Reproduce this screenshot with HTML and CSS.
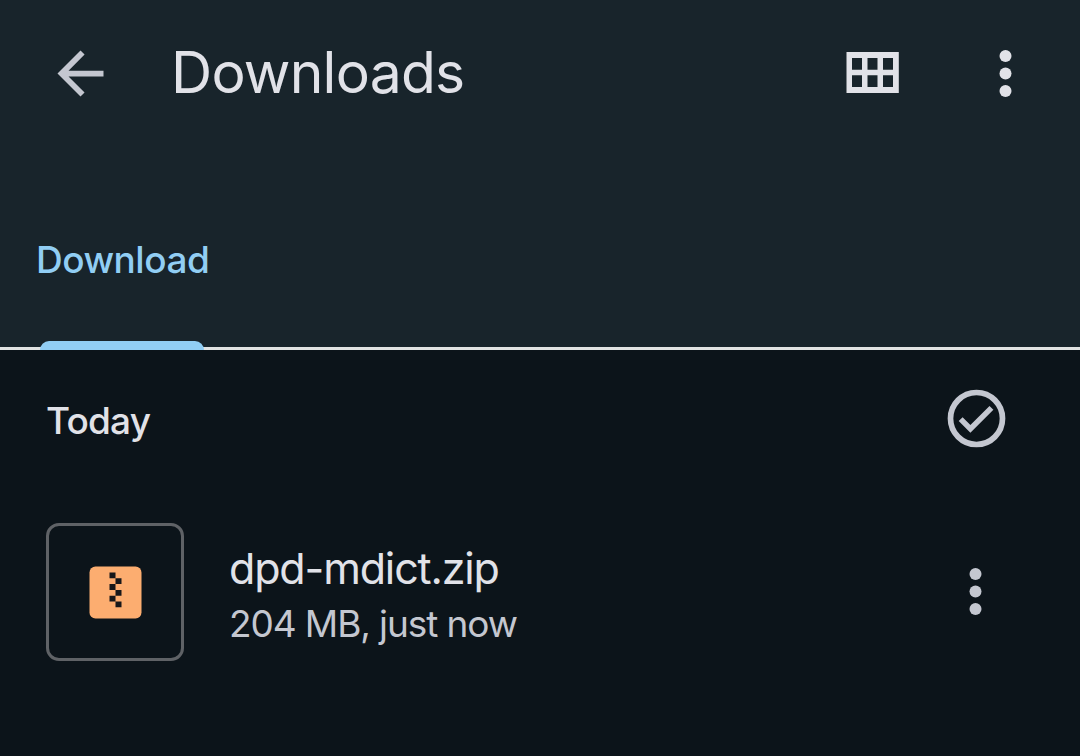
FILE: index.html
```html
<!DOCTYPE html>
<html lang="en">
<head>
<meta charset="utf-8">
<title>Downloads</title>
<link rel="stylesheet" href="styles.css">
</head>
<body>
<header class="header">
  <div class="toolbar">
    <svg class="back" viewBox="0 0 24 24"><path d="M20 11H7.83l5.59-5.59L12 4l-8 8 8 8 1.41-1.41L7.83 13H20z"/></svg>
    <h1 class="title">Downloads</h1>
    <svg class="grid" viewBox="-.5 0 53 41"><path fill-rule="evenodd" d="M0 0H52.3V41H0ZM5.5 6V17.8H15.5V6ZM21 6V17.8H31V6ZM36.5 6V17.8H46.5V6ZM5.5 23.2V35H15.5V23.2ZM21 23.2V35H31V23.2ZM36.5 23.2V35H46.5V23.2Z"/></svg>
    <svg class="more" viewBox="0 0 13 47"><circle cx="6.5" cy="6" r="6"/><circle cx="6.5" cy="23.5" r="6"/><circle cx="6.5" cy="41" r="6"/></svg>
  </div>
  <nav class="tabs"><a class="tab"><span class="tab-label">Download</span></a></nav>
</header>
<main>
  <div class="section">
    <h2 class="section-title">Today</h2>
    <svg class="select" viewBox="-.5 -.5 59 59"><circle cx="29" cy="29" r="26"/><path d="M11.2 31.6l3.9-3.9 7.8 7.8L42 16.4l3.9 3.9L22.9 43.3z"/></svg>
  </div>
  <div class="file">
    <div class="thumb">
      <svg class="zip" viewBox="-.5 -.5 53 53"><rect class="zip-body" width="52" height="52" rx="6"/><path class="zip-teeth" d="M20 6h6v5.8h-6zM26 11.8h6v5.8h-6zM20 17.6h6v5.8h-6zM26 23.4h6v5.8h-6zM20 29.2h6V35h-6zM26 35h6v5.8h-6z"/></svg>
    </div>
    <div class="info">
      <div class="name">dpd-mdict.zip</div>
      <div class="meta">204 MB, just now</div>
    </div>
    <svg class="more row-more" viewBox="0 0 13 47"><circle cx="6.5" cy="6" r="6"/><circle cx="6.5" cy="23.5" r="6"/><circle cx="6.5" cy="41" r="6"/></svg>
  </div>
</main>
</body>
</html>
```
FILE: styles.css
```css
* { box-sizing: border-box; }
body {
  margin: 0;
  height: 756px;
  overflow: hidden;
  background: #0c141a;
  color: #e1e2e8;
  font-family: Inter, "Liberation Sans", sans-serif;
}
h1, h2 { margin: 0; }
svg { display: block; flex: none; }
.header {
  height: 350px;
  display: flex;
  flex-direction: column;
  justify-content: space-between;
  background: #18242b;
  border-bottom: 3px solid #e1e3e3;
}
.toolbar {
  height: 147px;
  display: flex;
  align-items: center;
  padding: 0 68px 0 46px;
}
.back { width: 69px; height: 69px; fill: #c4c7d0; }
.title {
  margin: -1px 0 0 56px;
  font-size: 57px;
  line-height: 70px;
  font-weight: 400;
  letter-spacing: -0.75px;
}
.grid { width: 53px; height: 41px; margin: 0 100px 2px auto; fill: #e1e2e8; }
.more { width: 13px; height: 47px; fill: #e1e2e8; }
.tabs { display: flex; height: 120px; padding-left: 36px; margin-bottom: -3px; }
.tab {
  width: 171px;
  display: flex;
  flex-direction: column;
  justify-content: space-between;
  color: #91cef4;
}
.tab::after {
  content: "";
  width: 164px;
  height: 9px;
  margin-left: 4px;
  border-radius: 9px 9px 0 0;
  background: #91cef4;
}
.tab-label {
  font-size: 37px;
  line-height: 60px;
  font-weight: 500;
  letter-spacing: -0.5px;
}
.section {
  height: 137px;
  display: flex;
  align-items: center;
  justify-content: space-between;
  padding: 0 74px 0 46px;
}
.section-title {
  padding-top: 4px;
  font-size: 37px;
  line-height: 50px;
  font-weight: 500;
  letter-spacing: -0.8px;
}
.select { width: 59px; height: 59px; fill: #c4c7d0; }
.select circle { fill: none; stroke: #c4c7d0; stroke-width: 5.7; }
.file {
  display: flex;
  align-items: center;
  height: 138px;
  margin-top: 36px;
  padding: 0 98px 0 46px;
}
.thumb {
  width: 138px;
  height: 138px;
  display: grid;
  place-items: center;
  border: 3px solid #5f6266;
  border-radius: 13px;
}
.zip { width: 53px; height: 53px; margin: 1px 0 0 1px; }
.zip-body { fill: #fcad70; }
.zip-teeth { fill: #171719; }
.info { margin-left: 45px; padding-top: 8px; white-space: nowrap; }
.name {
  font-size: 43px;
  line-height: 56px;
  font-weight: 400;
  letter-spacing: -1.15px;
}
.meta {
  font-size: 37px;
  line-height: 56px;
  font-weight: 400;
  letter-spacing: -1.1px;
  color: #c4c7d0;
}
.row-more { margin: 0 0 1px auto; fill: #c4c7d0; }
```
